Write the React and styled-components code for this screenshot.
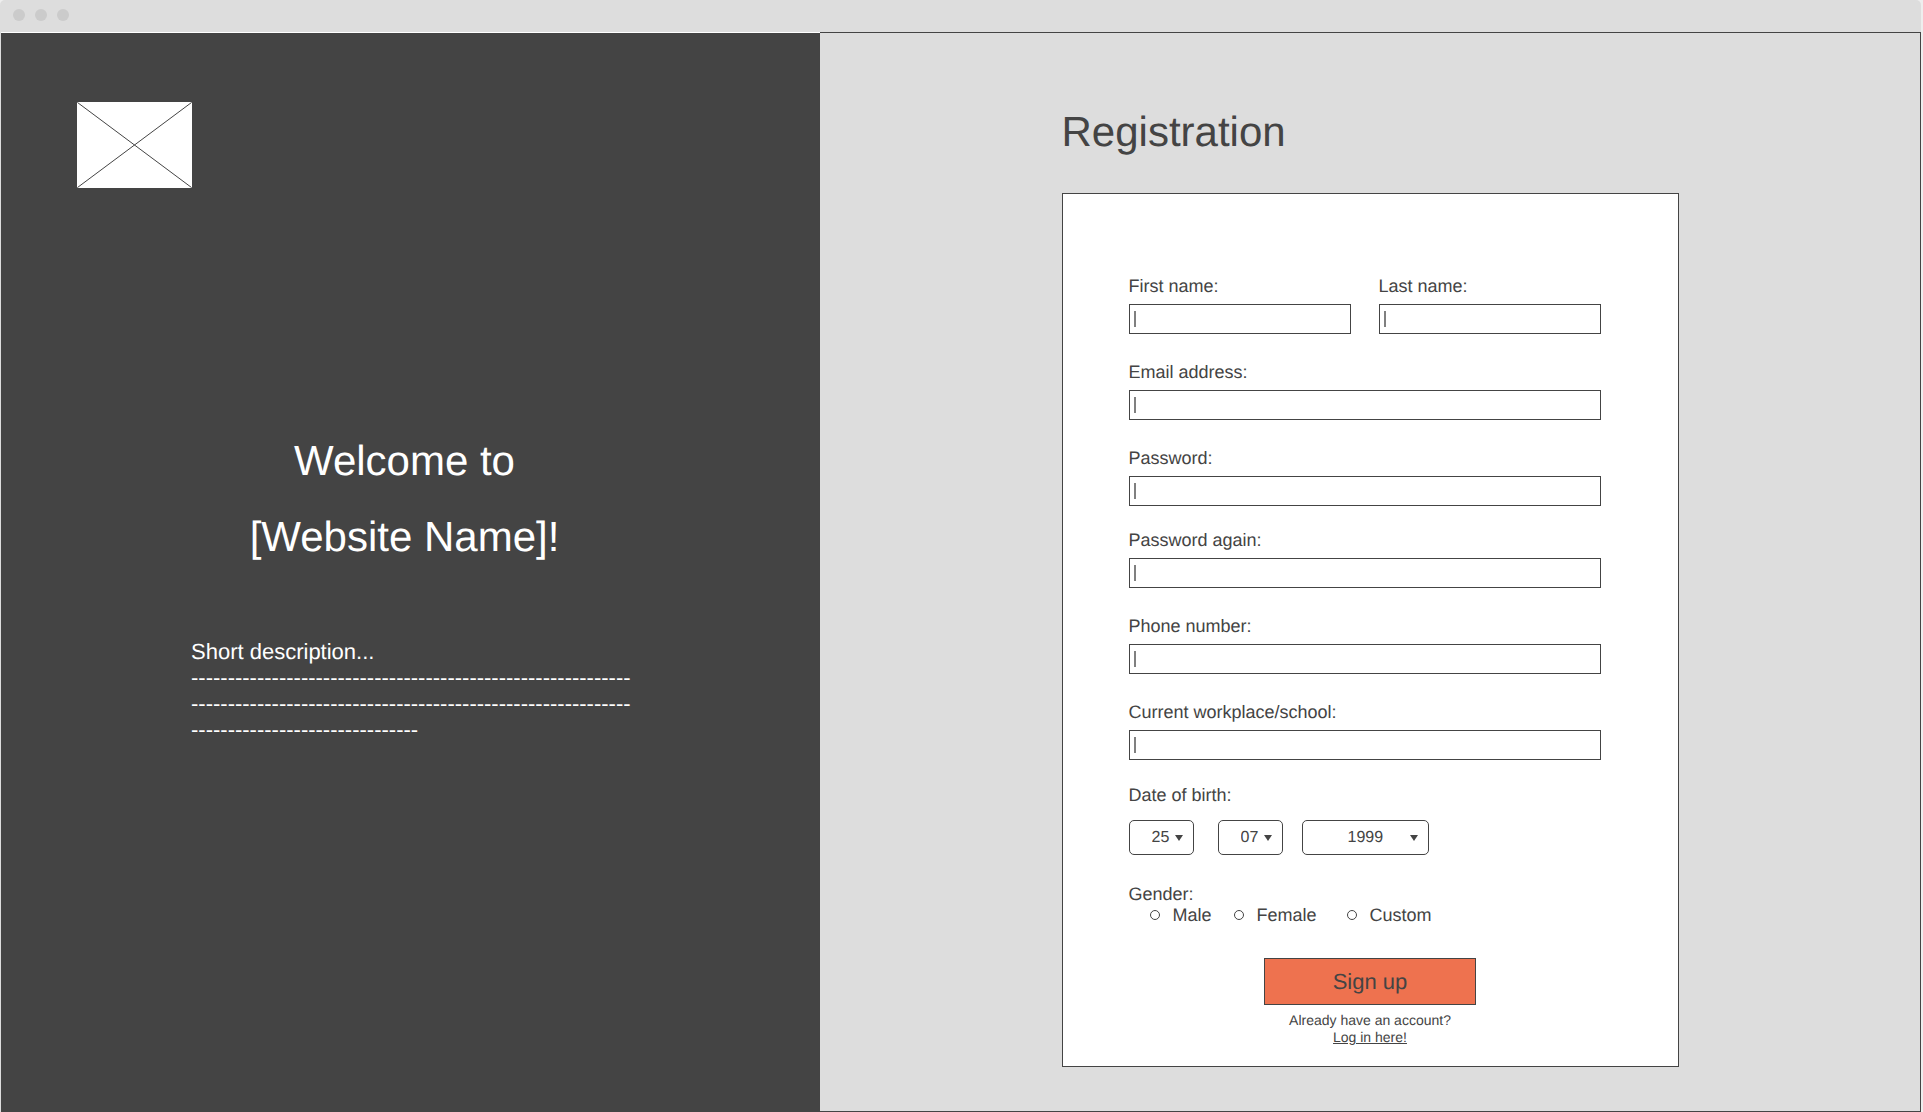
import React from "react";
import styled, { createGlobalStyle } from "styled-components";

const ink = "#444444";
const panel = "#dddddd";

const GlobalStyle = createGlobalStyle`
  *, *::before, *::after { box-sizing: border-box; }
  body {
    margin: 0;
    background: #eeeeee;
    color: ${ink};
    font-family: "Liberation Sans", Arial, Helvetica, sans-serif;
    text-rendering: geometricPrecision;
  }
  h1, h2, p, fieldset, legend { margin: 0; padding: 0; border: 0; font-weight: 400; }
  input, select, button { font: inherit; color: inherit; margin: 0; text-rendering: inherit; }
`;

const Window = styled.div`
  display: flex;
  flex-direction: column;
  min-height: 100vh;
  padding-right: 2px;
`;

const TitleBar = styled.header`
  display: flex;
  align-items: center;
  gap: 10px;
  height: 32px;
  padding: 0 13px 2px;
  background: ${panel};
  border-radius: 5px 5px 0 0;
`;

const Dot = styled.span`
  width: 12px;
  height: 12px;
  border-radius: 50%;
  background: #cbcbcb;
`;

const Split = styled.main`
  flex: 1;
  display: grid;
  grid-template-columns: 819fr 1101fr;
  border-left: 1px solid ${panel};
`;

const Intro = styled.section`
  background: ${ink};
  color: #ffffff;
  border-top: 1px solid #ffffff;
  padding: 69px 76px 0;
`;

const Placeholder = styled.svg`
  display: block;
  width: 115px;
  height: 86px;
`;

const Welcome = styled.h1`
  margin-top: 235px;
  padding-right: 12px;
  text-align: center;
  font-size: 42px;
  line-height: 76px;
`;

const Description = styled.div`
  margin-top: 64px;
  padding-left: 114px;
  font-size: 22px;
  line-height: 26px;
  white-space: nowrap;
`;

const Side = styled.section`
  display: flex;
  justify-content: center;
  background: ${panel};
  border: 1px solid ${ink};
  border-left: 0;
  padding: 74px 24px 43px;
`;

const Content = styled.div`
  width: 100%;
  max-width: 617px;
`;

const Title = styled.h2`
  font-size: 42px;
  line-height: 50px;
`;

const Card = styled.form`
  margin-top: 36px;
  padding: 82px 77px 20px 66px;
  background: #ffffff;
  border: 1px solid ${ink};
  font-size: 18px;
  line-height: 20px;
`;

const Row = styled.div`
  display: grid;
  grid-template-columns: 1fr 1fr;
  gap: 28px;
`;

const Field = styled.div`
  display: flex;
  flex-direction: column;
  gap: 8px;
  margin-top: ${(p) => p.$space || 0}px;
`;

const TextInput = styled.input`
  width: 100%;
  height: 30px;
  padding: 0 8px;
  border: 1px solid ${ink};
  border-radius: 0;
  outline: 0;
  background: linear-gradient(#808080, #808080) 4px center / 2px 16px no-repeat #ffffff;
`;

const Group = styled.fieldset`
  margin-top: ${(p) => p.$space}px;
  min-width: 0;
`;

const Dates = styled.div`
  display: flex;
  margin-top: 15px;
`;

const Picker = styled.div`
  position: relative;
  width: ${(p) => p.$width}px;
  margin-right: ${(p) => p.$after || 0}px;
`;

const Select = styled.select`
  appearance: none;
  display: block;
  width: 100%;
  height: 35px;
  padding: 0 0 0 ${(p) => p.$inset}px;
  border: 1px solid ${ink};
  border-radius: 5px;
  background: #ffffff;
  font-size: 16px;
`;

const Arrow = styled.svg`
  position: absolute;
  right: 11px;
  top: 15px;
  width: 8px;
  height: 6px;
  pointer-events: none;
`;

const Options = styled.div`
  display: flex;
  padding-left: 21px;
  margin-top: 1px;
`;

const Option = styled.label`
  display: flex;
  align-items: center;
  gap: 13px;
  margin-right: ${(p) => p.$after || 0}px;
`;

const Radio = styled.input`
  appearance: none;
  width: 10px;
  height: 10px;
  border: 1px solid ${ink};
  border-radius: 50%;
  background: #ffffff;
  &:checked { background: ${ink}; }
`;

const Actions = styled.div`
  display: flex;
  flex-direction: column;
  align-items: center;
  margin-top: 33px;
  padding-left: 11px;
`;

const Submit = styled.button`
  width: 212px;
  height: 47px;
  padding: 0;
  border: 1px solid ${ink};
  background: #ee724f;
  font-size: 22px;
  line-height: 26px;
`;

const Hint = styled.p`
  margin-top: 7px;
  text-align: center;
  font-size: 14px;
  line-height: 17px;
`;

const Link = styled.a`
  display: block;
  color: inherit;
`;

const fields = [
  { id: "email", label: "Email address:", type: "email", space: 28 },
  { id: "password", label: "Password:", type: "password", space: 28 },
  { id: "password-again", label: "Password again:", type: "password", space: 24 },
  { id: "phone", label: "Phone number:", type: "tel", space: 28 },
  { id: "workplace", label: "Current workplace/school:", type: "text", space: 28 },
];

const TextField = ({ id, label, type = "text", space }) => (
  <Field $space={space}>
    <label htmlFor={id}>{label}</label>
    <TextInput id={id} name={id} type={type} />
  </Field>
);

const DatePart = ({ name, value, width, after, inset }) => (
  <Picker $width={width} $after={after}>
    <Select name={name} aria-label={name} defaultValue={value} $inset={inset}>
      <option>{value}</option>
    </Select>
    <Arrow viewBox="0 0 8 6" aria-hidden="true">
      <path d="M0 0H8L4 6Z" fill={ink} />
    </Arrow>
  </Picker>
);

const dash = (n) => "-".repeat(n);

export default function App() {
  return (
    <>
      <GlobalStyle />
      <Window>
        <TitleBar>
          <Dot />
          <Dot />
          <Dot />
        </TitleBar>
        <Split>
          <Intro>
            <Placeholder viewBox="0 0 115 86" aria-hidden="true">
              <rect width="115" height="86" rx="1" fill="#ffffff" />
              <path d="M0.5 0.5L114.5 85.5M114.5 0.5L0.5 85.5" stroke={ink} fill="none" />
            </Placeholder>
            <Welcome>
              Welcome to
              <br />
              [Website Name]!
            </Welcome>
            <Description>
              <p>Short description...</p>
              <p>{dash(60)}</p>
              <p>{dash(60)}</p>
              <p>{dash(31)}</p>
            </Description>
          </Intro>
          <Side>
            <Content>
              <Title>Registration</Title>
              <Card onSubmit={(e) => e.preventDefault()}>
                <Row>
                  <TextField id="first-name" label="First name:" />
                  <TextField id="last-name" label="Last name:" />
                </Row>
                {fields.map((f) => (
                  <TextField key={f.id} {...f} />
                ))}
                <Group $space={25}>
                  <legend>Date of birth:</legend>
                  <Dates>
                    <DatePart name="Day" value="25" width={65} after={24} inset={22} />
                    <DatePart name="Month" value="07" width={65} after={19} inset={22} />
                    <DatePart name="Year" value="1999" width={127} inset={45} />
                  </Dates>
                </Group>
                <Group $space={29}>
                  <legend>Gender:</legend>
                  <Options>
                    <Option $after={22}>
                      <Radio type="radio" name="gender" value="male" />
                      Male
                    </Option>
                    <Option $after={30}>
                      <Radio type="radio" name="gender" value="female" />
                      Female
                    </Option>
                    <Option>
                      <Radio type="radio" name="gender" value="custom" />
                      Custom
                    </Option>
                  </Options>
                </Group>
                <Actions>
                  <Submit type="submit">Sign up</Submit>
                  <Hint>
                    Already have an account?
                    <Link href="#login">Log in here!</Link>
                  </Hint>
                </Actions>
              </Card>
            </Content>
          </Side>
        </Split>
      </Window>
    </>
  );
}
